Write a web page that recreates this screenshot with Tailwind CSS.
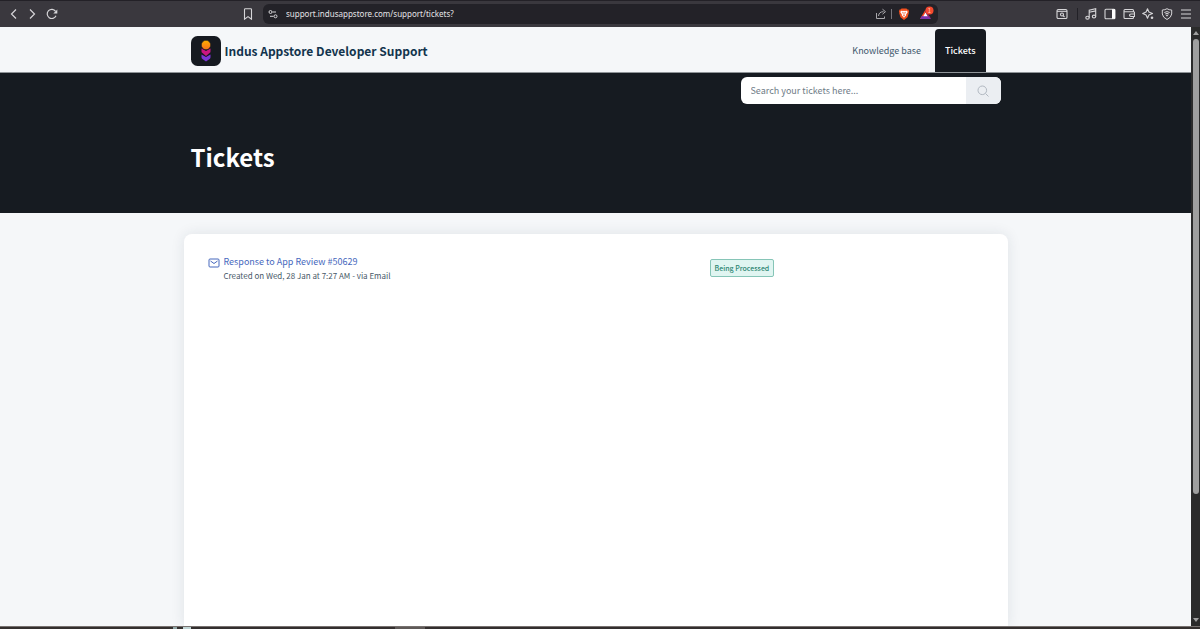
<!DOCTYPE html>
<html lang="en">
<head>
    <meta charset="UTF-8" />
    <meta name="viewport" content="width=device-width, initial-scale=1.0" />
    <title>Tickets : Indus Appstore Developer Support</title>
    <script src="https://cdn.jsdelivr.net/npm/@tailwindcss/browser@4"></script>
</head>
<body class="h-screen flex flex-col overflow-hidden bg-[#2b2a2b] font-['Noto_Sans_CJK_SC',sans-serif]">

    <!-- Browser toolbar -->
    <div class="h-[27px] shrink-0 flex items-center border-t border-[#232127] bg-[#3a383e] text-[#d6d5d8]">
        <div class="w-[263px] flex items-center pl-2 pr-2 gap-[7px]">
            <button aria-label="Back"><svg class="size-3" viewBox="0 0 12 12" fill="none" stroke="currentColor" stroke-width="1.2"><path d="M8 1.5 3.5 6 8 10.5" /></svg></button>
            <button aria-label="Forward"><svg class="size-3" viewBox="0 0 12 12" fill="none" stroke="currentColor" stroke-width="1.2"><path d="M3 1.5 7.5 6 3 10.5" /></svg></button>
            <button aria-label="Reload"><svg class="size-3" viewBox="0 0 12 12" fill="none" stroke="currentColor" stroke-width="1.2"><path d="M10 7.8A4.6 4.6 0 1 1 9.600 3.300" /><path d="M11.300 1.500v4H7.300z" fill="currentColor" stroke="none" /></svg></button>
            <button aria-label="Bookmark" class="ml-auto"><svg class="w-3.5 h-3" viewBox="0 0 14 12" fill="none" stroke="currentColor" stroke-width="1.1"><path d="M3.500 1.600q0-.8.8-.8h5.400q.8 0 .8.800v9.600L7 8.600l-3.500 2.600z" /></svg></button>
        </div>
        <div class="h-5 w-[675px] flex items-center rounded-md bg-[#232228] pl-1 pr-1">
            <svg class="w-3 h-3 shrink-0" viewBox="0 0 12 12" fill="none" stroke="currentColor" stroke-width="1"><circle cx="3.500" cy="4" r="1.500" /><path d="M5.500 4H9M3 8.300h3.500" /><circle cx="8.500" cy="8.300" r="1.500" /></svg>
            <input aria-label="Address" value="support.indusappstore.com/support/tickets?" class="ml-[7px] min-w-0 grow bg-transparent font-['Noto_Sans',sans-serif] text-[8px] leading-4 text-[#e4e3e6] outline-none" />
            <button aria-label="Share" class="mr-1"><svg class="size-3" viewBox="0 0 12 12" fill="none" stroke="#aaa9ad" stroke-width="1"><path d="M1.500 5v5.500h8V8.500M3.500 8c.3-3 2-4.300 5-4.300M7.500 1.200l3 2.500-3 2.500" /></svg></button>
            <span class="w-px h-2.5 bg-[#77757b]"></span>
            <button aria-label="Brave Shields" class="ml-1.5"><svg class="size-3" viewBox="0 0 12 12"><path d="M3.500.5h5l.9 1 1 .1.700 1.900-.4 1 .1.800-1.300 4L6 12 2.500 9.300l-1.300-4 .1-.8-.4-1 .7-1.900 1-.1z" fill="#f4511e" /><path d="m3.200 2.700 2 .4.800-.3.800.3 2-.4 1 1.300-1.700 2.600.2.700L6 9.700 3.700 7.300l.2-.7L2.200 4z" fill="#fff" /><path d="m4 4.200 1.300.4-.4.9M8 4.200l-1.300.4.400.9M6 4.800v1.600M5 7.300l1-.5 1 .5-1 .9z" fill="none" stroke="#f4511e" stroke-width=".6" /></svg></button>
            <button aria-label="Brave Rewards, 1 notification" class="ml-2"><svg class="w-4 h-4" viewBox="0 0 16 16"><path d="M7.500 3.500 2 13h3.800l1.700-3z" fill="#ff4724" /><path d="M2 13h11l-1.800-3H3.800z" fill="#7b35ad" /><path d="m7.500 3.500 5.500 9.500-3.300-3-2.200-3.500z" fill="#9e1f63" /><path d="M7.500 6.500 5.300 10.200h4.400z" fill="#fff" /><circle cx="11.500" cy="4.500" r="4" fill="#f4492e" /><text x="11.500" y="6.500" text-anchor="middle" font-size="6" fill="#ffc9bd">1</text></svg></button>
        </div>
        <div class="ml-auto flex items-center gap-[7px] pr-2">
            <button aria-label="Find in page"><svg class="size-3" viewBox="0 0 12 12" fill="none" stroke="currentColor" stroke-width="1.1"><rect x="1" y="1.500" width="10" height="9" rx="1.300" /><path d="M1 3.300h10" /><circle cx="6" cy="6.500" r="1.500" /><path d="m7 7.500 1.500 1.500" /></svg></button>
            <span class="w-px h-3 ml-0.5 bg-[#222127]"></span>
            <button aria-label="Media"><svg class="size-3" viewBox="0 0 12 12" fill="none" stroke="currentColor" stroke-width="1.1"><ellipse cx="2.500" cy="9.700" rx="1.700" ry="1.400" /><ellipse cx="9" cy="8.500" rx="1.700" ry="1.400" /><path d="M4.200 9.700V2.200l6.500-1.400v7.700M4.200 4.300l6.500-1.400" /></svg></button>
            <button aria-label="Side panel"><svg class="size-3" viewBox="0 0 12 12" fill="none" stroke="currentColor" stroke-width="1.1"><rect x="1" y="1.200" width="10" height="9.600" rx="1" /><path d="M8 1.200h3v9.600H8z" fill="#fff" stroke="none" /></svg></button>
            <button aria-label="Wallet"><svg class="size-3" viewBox="0 0 12 12" fill="none" stroke="currentColor" stroke-width="1.1"><path d="M10.500 3.700V2.500q0-1-1-1H2q-1 0-1 1v7q0 1 1 1h7.500q1 0 1-1V8.500M1 3.700h9.500q1 0 1 .8v4H8q-1.500 0-1.500-1.200T8 6h3.500" /></svg></button>
            <button aria-label="Leo AI"><svg class="size-3" viewBox="0 0 12 12" fill="none" stroke="currentColor" stroke-width="1.1" stroke-linejoin="round"><path d="M5.500.8 6.900 4 10.500 5.500 6.900 7 5.500 10.300 4.100 7 .7 5.500 4.100 4z" /><circle cx="10" cy="9.800" r="1.300" fill="currentColor" stroke="none" /></svg></button>
            <button aria-label="VPN"><svg class="size-3" viewBox="0 0 12 12" fill="none" stroke="currentColor" stroke-width="1"><path d="M6 .7q2 1.300 4.700 1.300v4Q10.300 9.500 6 11.500 1.700 9.500 1.300 6V2Q4 2 6 .7z" /><path d="M3.300 4.500q2.700-1.800 5.400 0M4.200 6q1.800-1.200 3.600 0" /><circle cx="6" cy="7.500" r=".6" fill="currentColor" /></svg></button>
            <button aria-label="Menu"><svg class="size-3" viewBox="0 0 12 12" fill="none" stroke="currentColor" stroke-width="1.1"><path d="M1 2h10M1 6h10M1 10h10" /></svg></button>
        </div>
    </div>

    <div class="grow min-h-0 flex">
        <!-- Page -->
        <div class="grow flex flex-col bg-[#f5f7f9]">
            <header class="h-[46px] shrink-0 border-b border-[#8f9498] px-4">
                <div class="h-full max-w-[810px] mx-auto pt-0.5 flex items-center">
                    <a href="#" class="flex items-center gap-1">
                        <svg class="size-[30px]" viewBox="0 0 30 30">
                            <defs>
                                <linearGradient id="sun" x1="0" y1="0" x2="0" y2="1"><stop offset="0" stop-color="#ffb000" /><stop offset="1" stop-color="#f9701c" /></linearGradient>
                            </defs>
                            <rect width="30" height="30" rx="6.500" fill="#161a20" />
                            <path d="M10.500 18.500 15 21l4.500-2.500v2.800q0 1-1 1.600L15 25.500l-3.500-2.600q-1-.6-1-1.600z" fill="#7c35d6" />
                            <path d="M10.500 12.500 15 15l4.500-2.500v3q0 1-1 1.600L15 20l-3.500-2.900q-1-.6-1-1.600z" fill="#cb1582" />
                            <circle cx="15" cy="9" r="4.700" fill="url(#sun)" stroke="#161a20" stroke-width=".6" />
                        </svg>
                        <span class="text-[12px] leading-5 font-bold text-[#12344d]">Indus Appstore Developer Support</span>
                    </a>
                    <nav class="ml-auto mr-[15px] h-full flex text-[9px] leading-4">
                        <a href="#" class="flex items-center px-3.5 text-[#3c566b]">Knowledge base</a>
                        <a href="#" class="flex items-center rounded-t-sm bg-[#161a20] px-2.5 font-medium text-white">Tickets</a>
                    </nav>
                </div>
            </header>

            <section class="h-[140px] shrink-0 bg-[#161b21] px-4">
                <div class="max-w-[810px] mx-auto pt-1">
                    <form class="ml-auto w-[260px] h-[27px] flex rounded-md overflow-hidden bg-white">
                        <input type="search" aria-label="Search your tickets" placeholder="Search your tickets here..." class="min-w-0 grow px-2.5 text-[9px] text-[#475867] placeholder:text-[#6f7c87] outline-none" />
                        <button type="button" aria-label="Search" class="w-[35px] flex items-center justify-center bg-[#ebeef2]">
                            <svg class="size-3" viewBox="0 0 12 12" fill="none" stroke="#b1b8c1" stroke-width="1"><circle cx="5.300" cy="5.300" r="4.300" /><path d="m8.500 8.500 3 3" /></svg>
                        </button>
                    </form>
                    <h1 class="mt-[35px] text-2xl leading-9 font-bold text-white">Tickets</h1>
                </div>
            </section>

            <main class="grow min-h-0 px-4 pt-[21px] flex">
                <div class="w-full max-w-[824px] mx-auto rounded-t-lg bg-white shadow-[0_0_14px_rgba(30,50,70,0.10)] px-6 pt-5">
                    <div class="flex items-start">
                        <svg class="mt-[3px] mr-1 w-3 h-3 shrink-0" viewBox="0 0 12 12" fill="none" stroke="#4668bd" stroke-width="1"><rect x="1" y="2" width="10" height="8" rx="1" /><path d="m2.500 4 3.500 2.500L9.500 4" /></svg>
                        <div class="w-[486px]">
                            <a href="#" class="block text-[9px] leading-4 text-[#4668bd]">Response to App Review #50629</a>
                            <p class="text-[8px] leading-3 text-[#475867]">Created on Wed, 28 Jan at 7:27 AM - via Email</p>
                        </div>
                        <span class="mt-[5px] h-[18px] flex items-center rounded-xs border border-[#86c5b7] bg-[#e0f5f1] px-1 text-[7px] font-medium text-[#2d8571]">Being Processed</span>
                    </div>
                </div>
            </main>
        </div>

        <!-- Scrollbar -->
        <div class="w-[9px] shrink-0 flex flex-col items-center bg-[#2b2b2b] pt-1 pb-1">
            <svg class="w-1.5 h-1" viewBox="0 0 6 4"><path d="M3 0 6 4H0z" fill="#a0a0a0" /></svg>
            <div class="mt-1 w-1.5 h-[455px] rounded-full bg-[#9f9f9f]"></div>
            <svg class="mt-auto w-1.5 h-1" viewBox="0 0 6 4"><path d="M0 0h6L3 4z" fill="#a0a0a0" /></svg>
        </div>
    </div>

    <!-- Taskbar edge -->
    <div class="h-[3px] shrink-0 flex border-t border-[#77716f] bg-[#332f2e]">
        <span class="ml-[173px] w-1 bg-[#8fa5a5]"></span>
        <span class="ml-1.5 w-2 bg-[#c0d5d5]"></span>
        <span class="ml-[204px] w-[30px] bg-[#5f5a58]"></span>
    </div>

</body>
</html>
